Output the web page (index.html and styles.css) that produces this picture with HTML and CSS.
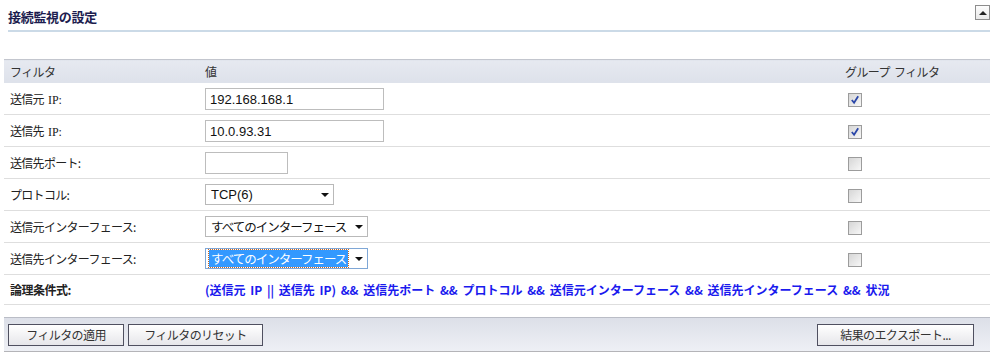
FILE: index.html
```html
<!DOCTYPE html>
<html lang="ja">
<head>
    <meta charset="UTF-8">
    <title>接続監視の設定</title>
    <link rel="stylesheet" href="styles.css">
</head>
<body>
    <div class="panel">
        <div class="title-bar">
            <h1>接続監視の設定</h1>
            <span class="collapse"><span class="tri-up"></span></span>
        </div>

        <table class="filters">
            <colgroup>
                <col class="c-label">
                <col class="c-value">
                <col class="c-group">
            </colgroup>
            <thead>
                <tr>
                    <th>フィルタ</th>
                    <th>値</th>
                    <th>グループ&nbsp; フィルタ</th>
                </tr>
            </thead>
            <tbody>
                <tr>
                    <td>送信元<span class="ip">IP:</span></td>
                    <td><input class="text wide" type="text" value="192.168.168.1"></td>
                    <td><span class="check on"><svg viewBox="0 0 11 11"><path d="M2 5.5 L4.5 8.5 L9 1.5" /></svg></span></td>
                </tr>
                <tr>
                    <td>送信先<span class="ip">IP:</span></td>
                    <td><input class="text wide" type="text" value="10.0.93.31"></td>
                    <td><span class="check on"><svg viewBox="0 0 11 11"><path d="M2 5.5 L4.5 8.5 L9 1.5" /></svg></span></td>
                </tr>
                <tr>
                    <td>送信先ポート:</td>
                    <td><input class="text short" type="text" value=""></td>
                    <td><span class="check"></span></td>
                </tr>
                <tr>
                    <td>プロトコル:</td>
                    <td><div class="select proto"><span class="opt latin">TCP(6)</span><span class="arrow"></span></div></td>
                    <td><span class="check"></span></td>
                </tr>
                <tr>
                    <td>送信元インターフェース:</td>
                    <td><div class="select iface"><span class="opt">すべてのインターフェース</span><span class="arrow"></span></div></td>
                    <td><span class="check"></span></td>
                </tr>
                <tr>
                    <td>送信先インターフェース:</td>
                    <td><div class="select iface focused"><span class="opt">すべてのインターフェース</span><span class="arrow"></span></div></td>
                    <td><span class="check"></span></td>
                </tr>
                <tr class="logic">
                    <td><b>論理条件式:</b></td>
                    <td colspan="2" class="expr">(送信元 IP || 送信先 IP) &amp;&amp; 送信先ポート &amp;&amp; プロトコル &amp;&amp; 送信元インターフェース &amp;&amp; 送信先インターフェース &amp;&amp; 状況</td>
                </tr>
            </tbody>
        </table>

        <div class="footer">
            <button class="btn apply">フィルタの適用</button>
            <button class="btn reset">フィルタのリセット</button>
            <span class="spacer"></span>
            <button class="btn export">結果のエクスポート...</button>
        </div>
    </div>
</body>
</html>
```

FILE: styles.css
```css
body {
    margin: 0;
    background: #fff;
    font-family: "Noto Sans CJK JP", "Liberation Sans", sans-serif;
    font-size: 12px;
    color: #222;
}
.panel {
    width: 986px;
    padding: 0 0 0 4px;
}
.title-bar {
    display: flex;
    align-items: flex-end;
    justify-content: space-between;
    height: 30px;
    margin-left: 4px;
    border-bottom: 2px solid #cbdae7;
    position: relative;
}
h1 {
    margin: 0 0 4px 0;
    font-size: 13px;
    font-weight: bold;
    color: #1d1d4f;
    letter-spacing: -0.3px;
}
.collapse {
    position: absolute;
    right: 0;
    top: 5px;
    width: 13px;
    height: 13px;
    border: 1px solid #8d8d8d;
    background: linear-gradient(#fdfdfd, #e9e9e9);
    display: flex;
    align-items: center;
    justify-content: center;
}
.tri-up {
    width: 0;
    height: 0;
    border-left: 4px solid transparent;
    border-right: 4px solid transparent;
    border-bottom: 4px solid #222;
}
.filters {
    width: 986px;
    margin-top: 27px;
    border-collapse: collapse;
    table-layout: fixed;
}
.c-label { width: 201px; }
.c-value { width: 640px; }
.c-group { width: 145px; }
.filters th {
    height: 23px;
    padding: 0;
    text-align: left;
    font-weight: normal;
    color: #333;
    border-top: 1px solid #c3c6ce;
    background: linear-gradient(#e6e9f0, #dde1ea);
    letter-spacing: -0.6px;
}
.filters th:first-child { padding-left: 6px; }
.filters td {
    height: 31px;
    padding: 0;
    border-bottom: 1px solid #dedede;
    letter-spacing: -0.7px;
    white-space: nowrap;
}
.filters td:first-child { padding-left: 6px; }
.filters td:nth-child(3) { padding-left: 3px; }
.ip {
    margin-left: 4px;
    font-family: "Liberation Serif", serif;
    font-size: 12px;
    letter-spacing: 0;
}
.text {
    box-sizing: border-box;
    height: 22px;
    margin: 0;
    padding: 1px 4px 0;
    border: 1px solid #bdbdbd;
    font-family: "Liberation Sans", sans-serif;
    font-size: 13px;
    color: #111;
    letter-spacing: 0;
    vertical-align: middle;
}
.wide { width: 179px; }
.short { width: 83px; }
.select {
    box-sizing: border-box;
    display: flex;
    align-items: center;
    height: 21px;
    border: 1px solid #b9b9b9;
    background: #fff;
    padding: 0 4px 0 3px;
    font-size: 12.5px;
    letter-spacing: -1px;
    color: #111;
}
.proto { width: 129px; }
.iface { width: 163px; }
.opt { padding: 0 2px; line-height: 17px; }
.latin {
    font-family: "Liberation Sans", sans-serif;
    font-size: 13px;
    letter-spacing: 0;
}
.focused { border-color: #7fa7d6; }
.focused .opt {
    background: #3399ff;
    color: #fff;
    outline: 1px dotted #c8641e;
}
.arrow {
    margin-left: auto;
    width: 0;
    height: 0;
    border-left: 4px solid transparent;
    border-right: 4px solid transparent;
    border-top: 4px solid #111;
}
.check {
    box-sizing: border-box;
    display: inline-flex;
    align-items: center;
    justify-content: center;
    width: 14px;
    height: 14px;
    vertical-align: middle;
    border: 1px solid #9c9c9c;
    background: linear-gradient(135deg, #d6d6d6, #f7f7f7);
}
.check svg {
    width: 10px;
    height: 10px;
}
.check path {
    fill: none;
    stroke: #2a46a8;
    stroke-width: 2;
}
.logic td { height: 29px; }
.logic b { color: #222; letter-spacing: -0.5px; }
.filters td.expr {
    font-weight: bold;
    color: #1a1aee;
    letter-spacing: 0;
    word-spacing: 2px;
}
.footer {
    display: flex;
    align-items: center;
    gap: 4px;
    margin-top: 12px;
    height: 33px;
    padding: 0 16px 0 4px;
    border-top: 1px solid #babdc6;
    border-bottom: 1px solid #b4b4b8;
    background: linear-gradient(#dcdfe8, #eef0f5);
}
.spacer { flex: 1; }
.btn {
    height: 22px;
    padding: 0;
    border: 1px solid #4f5060;
    background: linear-gradient(#ffffff, #e6e6ea);
    font-family: "Noto Sans CJK JP", sans-serif;
    font-size: 12px;
    letter-spacing: -0.6px;
    color: #333;
}
.apply { width: 116px; }
.reset { width: 135px; }
.export { width: 157px; }
```
